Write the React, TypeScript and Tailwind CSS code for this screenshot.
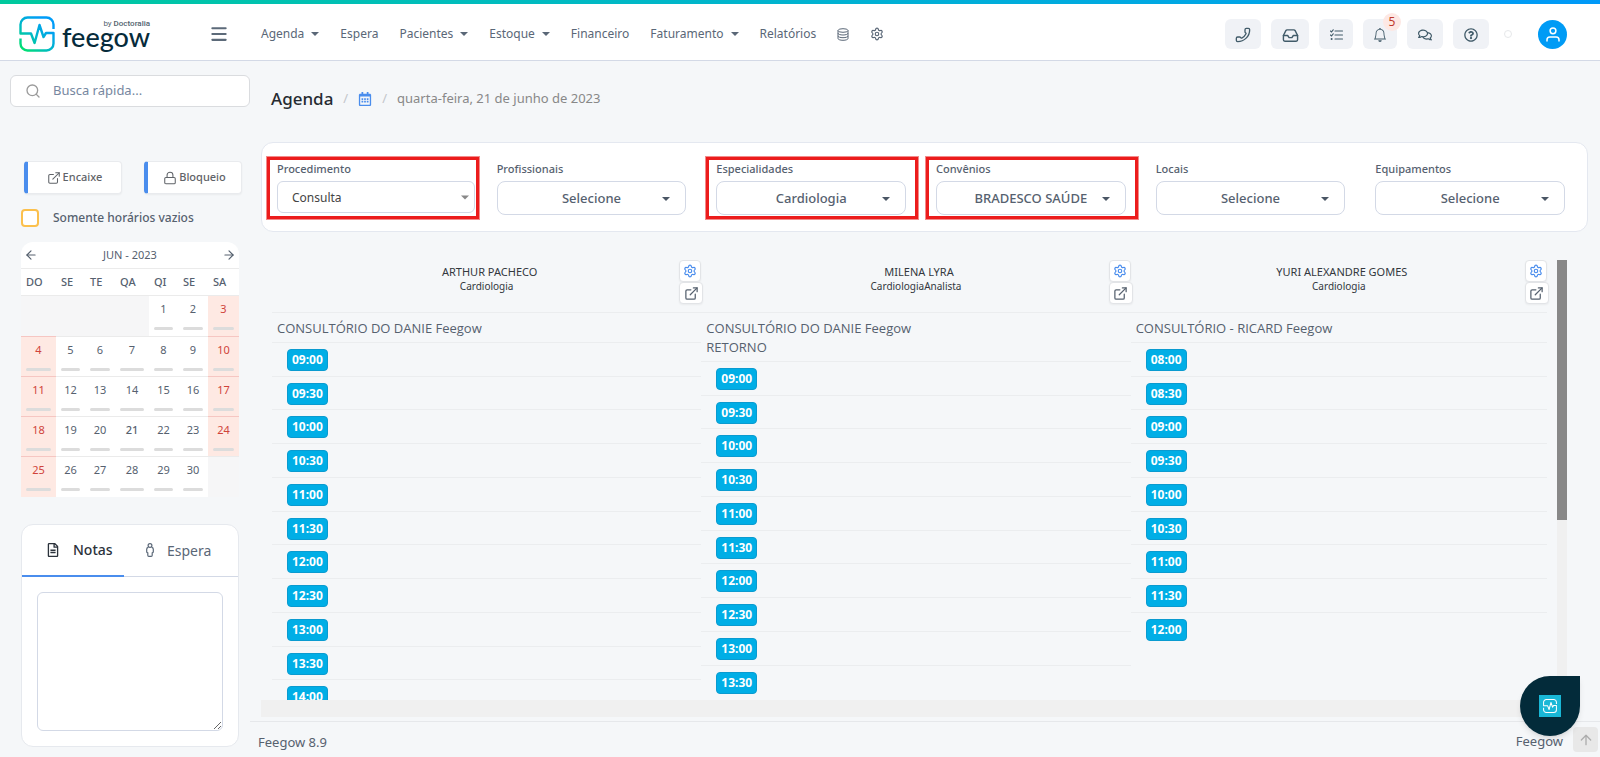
import { ReactNode } from 'react';
import { clsx } from 'clsx';
import {
  ArrowLeft,
  ArrowRight,
  ArrowUp,
  ExternalLink,
  Inbox,
  Lock,
  Menu,
  Phone,
  Search,
  Settings,
} from 'lucide-react';
import { BsBell } from 'react-icons/bs';
import { FaRegCalendarAlt, FaRegComments, FaRegFileAlt, FaRegQuestionCircle } from 'react-icons/fa';

const NAV = [
  { label: 'Agenda', menu: true },
  { label: 'Espera' },
  { label: 'Pacientes', menu: true },
  { label: 'Estoque', menu: true },
  { label: 'Financeiro' },
  { label: 'Faturamento', menu: true },
  { label: 'Relatórios' },
];

const FILTERS = [
  { id: 'profissionais', label: 'Profissionais', value: 'Selecione' },
  { id: 'especialidades', label: 'Especialidades', value: 'Cardiologia', marked: true },
  { id: 'convenios', label: 'Convênios', value: 'BRADESCO SAÚDE', marked: true },
  { id: 'locais', label: 'Locais', value: 'Selecione' },
  { id: 'equipamentos', label: 'Equipamentos', value: 'Selecione' },
];

const WEEKDAYS = ['DO', 'SE', 'TE', 'QA', 'QI', 'SE', 'SA'];

const WEEKS = [
  [0, 0, 0, 0, 1, 2, 3],
  [4, 5, 6, 7, 8, 9, 10],
  [11, 12, 13, 14, 15, 16, 17],
  [18, 19, 20, 21, 22, 23, 24],
  [25, 26, 27, 28, 29, 30, 0],
];

const SCHEDULE = [
  {
    name: 'ARTHUR PACHECO',
    specialty: 'Cardiologia',
    room: ['CONSULTÓRIO DO DANIE Feegow'],
    slots: ['09:00', '09:30', '10:00', '10:30', '11:00', '11:30', '12:00', '12:30', '13:00', '13:30', '14:00'],
  },
  {
    name: 'MILENA LYRA',
    specialty: 'CardiologiaAnalista',
    room: ['CONSULTÓRIO DO DANIE Feegow', 'RETORNO'],
    slots: ['09:00', '09:30', '10:00', '10:30', '11:00', '11:30', '12:00', '12:30', '13:00', '13:30'],
  },
  {
    name: 'YURI ALEXANDRE GOMES',
    specialty: 'Cardiologia',
    room: ['CONSULTÓRIO - RICARD Feegow'],
    slots: ['08:00', '08:30', '09:00', '09:30', '10:00', '10:30', '11:00', '11:30', '12:00'],
  },
];

function Caret({ className }: { className?: string }) {
  return (
    <svg viewBox="0 0 8 4" className={clsx('w-2 h-1 fill-current', className)} aria-hidden="true">
      <path d="M0 0h8L4 4z" />
    </svg>
  );
}

function PulsePath() {
  return (
    <path
      d="M34.5 13V8.5a7 7 0 0 0-7-7h-19a7 7 0 0 0-7 7v9H12l3.600 9.500L20.500 9l4 12 2.500-4h7.500v10.500a7 7 0 0 1-7 7h-19a7 7 0 0 1-7-7V22.500"
      strokeLinejoin="round"
    />
  );
}

function Logo() {
  return (
    <a href="#" aria-label="feegow by Doctoralia" className="flex items-start gap-[7px]">
      <svg viewBox="0 0 36 36" className="w-9 h-9" fill="none" stroke="url(#logo)" strokeWidth="2.400">
        <defs>
          <linearGradient id="logo" gradientUnits="userSpaceOnUse" x1="3" y1="33" x2="26" y2="6">
            <stop offset="0" stopColor="#00e070" />
            <stop offset="0.500" stopColor="#00b8c8" />
            <stop offset="1" stopColor="#009cf8" />
          </linearGradient>
        </defs>
        <PulsePath />
      </svg>
      <span className="flex flex-col pt-[3px] text-[#062b3b]">
        <span className="text-right font-[Roboto] text-[8px] leading-[10px] text-[#52626e]">
          by <b className="font-medium">Doctoralia</b>
        </span>
        <span className="font-[Lato] text-[27px] leading-4 font-medium">feegow</span>
      </span>
    </a>
  );
}

function DatabaseIcon() {
  return (
    <svg viewBox="0 0 12 13" className="w-3 h-[13px]" fill="none" stroke="currentColor">
      <ellipse cx="6" cy="2.500" rx="5" ry="1.800" />
      <path d="M1 2.500v8c0 1 2.200 1.800 5 1.800s5-.8 5-1.800v-8M1 5.200C1 6.200 3.200 7 6 7s5-.8 5-1.800M1 7.900c0 1 2.200 1.800 5 1.800s5-.8 5-1.800" />
    </svg>
  );
}

function TasksIcon() {
  return (
    <svg viewBox="0 0 13 12" className="w-[13px] h-3" fill="none" stroke="currentColor" strokeLinecap="round">
      <path d="M5 2h7.500M5 6h7.500M5 10h7.500" strokeWidth="1.100" />
      <path d="M.5 2l1 1L3.200.8M.5 6l1 1L3.200 4.800" strokeWidth="1.100" />
      <circle cx="1.600" cy="10" r="1" fill="currentColor" stroke="none" />
    </svg>
  );
}

function PersonIcon() {
  return (
    <svg viewBox="0 0 8 14" className="w-2 h-[14px]" fill="none" stroke="currentColor" strokeWidth="1.200">
      <circle cx="4" cy="2.500" r="1.900" />
      <path d="M2.200 4.400C1.100 4.600.7 5.200.7 6.200v2.600c0 .7.400 1 1.100 1.100v2.300c0 .8.400 1.200 1 1.200h2.400c.6 0 1-.4 1-1.200V9.900c.7-.1 1.100-.4 1.100-1.100V6.200c0-1-.4-1.600-1.500-1.800" />
    </svg>
  );
}

function UserIcon() {
  return (
    <svg viewBox="0 0 14 15" className="w-[14px] h-[15px]" fill="none" stroke="currentColor" strokeWidth="1.500">
      <circle cx="7" cy="3.800" r="2.900" />
      <path d="M1 14.500v-1.700c0-1.700 1-2.800 2.800-2.800h6.400c1.800 0 2.800 1.100 2.800 2.800v1.700" />
    </svg>
  );
}

interface ToolButtonProps {
  label: string;
  className?: string;
  badge?: string;
  children: ReactNode;
}

function ToolButton({ label, className = 'w-9', badge, children }: ToolButtonProps) {
  return (
    <button
      type="button"
      aria-label={label}
      className={clsx('relative flex h-[30px] items-center justify-center rounded-md bg-[#f0f2f6] pt-0.5 text-[#415b69]', className)}
    >
      {children}
      {badge && (
        <span className="absolute -top-1.5 -right-1 flex h-[18px] w-[18px] items-center justify-center rounded-full bg-[#fde8e4] text-xs leading-none text-[#c0392b]">
          {badge}
        </span>
      )}
    </button>
  );
}

function Header() {
  return (
    <header className="shrink-0 border-b border-[#d3d9e6] bg-white">
      <div className="h-1 bg-linear-to-r from-[#00c99d] via-[#00b3d0] to-[#0099f8]" />
      <div className="flex h-14 items-center pt-1 pl-[19px] pr-[33px]">
        <div className="w-[190px]">
          <Logo />
        </div>
        <button type="button" aria-label="Abrir menu" className="w-[52px] text-[#5c6a79]">
          <Menu className="h-5 w-5" strokeWidth={2.5} />
        </button>
        <nav className="flex items-center gap-[21px] text-[12px] text-[#5a6777]">
          {NAV.map(item =>
            item.menu ? (
              <button key={item.label} type="button" className="flex items-center gap-[7px]">
                {item.label}
                <Caret />
              </button>
            ) : (
              <a key={item.label} href="#">{item.label}</a>
            )
          )}
          <button type="button" aria-label="Dados"><DatabaseIcon /></button>
          <button type="button" aria-label="Configurações"><Settings className="h-[14px] w-[14px]" /></button>
        </nav>
        <div className="ml-auto flex items-center gap-2.5">
          <ToolButton label="Telefone"><Phone className="h-4 w-4 -scale-x-100" strokeWidth={2} /></ToolButton>
          <ToolButton label="Caixa de entrada" className="w-[38px]"><Inbox className="h-[17px] w-[17px]" /></ToolButton>
          <ToolButton label="Tarefas" className="w-[34px]"><TasksIcon /></ToolButton>
          <ToolButton label="Notificações" className="w-[34px]" badge="5"><BsBell className="h-[14px] w-[14px]" /></ToolButton>
          <ToolButton label="Conversas"><FaRegComments className="h-[14px] w-[14px]" /></ToolButton>
          <ToolButton label="Ajuda"><FaRegQuestionCircle className="h-[14px] w-[14px]" /></ToolButton>
          <span className="mr-4 ml-[5px] h-2 w-2 rounded-full border border-[#e6e8ea]" />
          <button
            type="button"
            aria-label="Perfil"
            className="flex h-[29px] w-[29px] items-center justify-center rounded-full bg-[#009bf5] text-white"
          >
            <UserIcon />
          </button>
        </div>
      </div>
    </header>
  );
}

function Calendar() {
  return (
    <section className="overflow-hidden rounded-t-xl bg-white text-[#56616f]">
      <div className="flex h-[26px] items-center justify-between px-[3px] text-[11px]">
        <button type="button" aria-label="Mês anterior"><ArrowLeft className="h-[14px] w-[14px]" /></button>
        <span>JUN - 2023</span>
        <button type="button" aria-label="Próximo mês"><ArrowRight className="h-[14px] w-[14px]" /></button>
      </div>
      <table className="w-full table-fixed border-collapse text-[11px]">
        <colgroup>
          <col className="w-[35px]" />
          <col className="w-[29px]" />
          <col className="w-[30px]" />
          <col className="w-[34px]" />
          <col className="w-[29px]" />
          <col className="w-[30px]" />
          <col className="w-[31px]" />
        </colgroup>
        <thead>
          <tr className="h-[27px] border-y border-[#ebebeb]">
            {WEEKDAYS.map((d, i) => (
              <th key={i} className="pl-[5px] text-left text-[11px] font-medium">{d}</th>
            ))}
          </tr>
        </thead>
        <tbody>
          {WEEKS.map((week, w) => (
            <tr key={w} className="h-10 first:h-[41px]">
              {week.map((day, i) => {
                const weekend = i === 0 || i === 6;
                return (
                  <td
                    key={i}
                    className={clsx(
                      'p-0 align-top',
                      w > 0 && 'border-t',
                      day > 0 && weekend ? 'border-[#f6c6c2] bg-[#fee9e3] text-[#d0433a]' : 'border-[#ebebeb]',
                      day === 0 && 'bg-[#f6f6f7]'
                    )}
                  >
                    {day > 0 && (
                      <div className="flex h-[39px] flex-col items-center justify-between px-[5px] pt-1 pb-[5px]">
                        <span className={clsx('leading-[18px]', day === 21 && 'font-medium')}>{day}</span>
                        <span className="h-[3px] w-full rounded-full bg-[#dcdcdc]" />
                      </div>
                    )}
                  </td>
                );
              })}
            </tr>
          ))}
        </tbody>
      </table>
    </section>
  );
}

function Notes() {
  return (
    <section className="flex min-h-[223px] flex-col rounded-xl border border-[#e6e9ee] bg-white">
      <div className="flex border-b border-[#d3d9e6] text-[14px]">
        <button
          type="button"
          className="-mb-px flex h-[52px] w-[102px] items-center gap-[13px] border-b-2 border-[#4a8ded] pl-6 font-medium text-[#2b323b]"
        >
          <FaRegFileAlt className="h-[14px] w-[14px]" />
          Notas
        </button>
        <button type="button" className="flex items-center gap-[13px] pl-[22px] text-[#5a6777]">
          <PersonIcon />
          Espera
        </button>
      </div>
      <div className="flex flex-1 p-[15px]">
        <textarea aria-label="Notas" className="w-full resize rounded-md border border-[#d3d9e6] bg-white" />
      </div>
    </section>
  );
}

function Sidebar() {
  return (
    <aside className="flex w-[250px] shrink-0 flex-col">
      <label className="ml-2.5 mt-3.5 flex h-8 items-center gap-3 rounded-md border border-[#dadcdf] bg-white pl-3.5 pr-2">
        <Search className="h-4 w-4 shrink-0 text-[#9b9b9b]" />
        <input
          type="search"
          aria-label="Busca rápida"
          placeholder="Busca rápida..."
          className="min-w-0 flex-1 bg-transparent text-[13px] outline-none placeholder:text-[#7787a0]"
        />
      </label>
      <div className="mt-[54px] flex justify-between pl-6 pr-2">
        {[
          { label: 'Encaixe', icon: <ExternalLink className="h-[14px] w-[14px]" strokeWidth={1.8} /> },
          { label: 'Bloqueio', icon: <Lock className="h-[14px] w-[14px]" strokeWidth={1.8} /> },
        ].map(action => (
          <button
            key={action.label}
            type="button"
            className="flex h-[33px] w-[98px] items-center justify-center gap-0.5 rounded border border-l-4 border-[#e9ebee] border-l-[#4a8ded] bg-white text-[11px] font-medium text-[#5f6368] shadow-xs"
          >
            {action.icon}
            {action.label}
          </button>
        ))}
      </div>
      <div className="flex flex-col pl-[21px] pr-[11px]">
        <label className="mt-[15px] flex items-center gap-3.5 text-[12px] leading-[18px] font-medium text-[#56616f]">
          <input
            type="checkbox"
            className="h-[18px] w-[18px] appearance-none rounded border-2 border-[#fbc04d] bg-white"
          />
          Somente horários vazios
        </label>
        <div className="mt-[15px]">
          <Calendar />
        </div>
        <div className="mt-[27px]">
          <Notes />
        </div>
      </div>
    </aside>
  );
}

function Marker() {
  return (
    <span className="pointer-events-none absolute -left-[11px] -right-[13px] -top-[7px] h-16 border-4 border-[#ec1c1c] outline-1 -outline-offset-1 outline-[#f38b8b]" />
  );
}

function Filters() {
  return (
    <section className="mr-3 ml-[11px] grid h-[90px] shrink-0 grid-cols-6 gap-x-[30px] rounded-xl border border-[#e4e8f0] bg-white pl-[15px] pr-[22px] pt-5">
      <div className="relative flex flex-col">
        <label htmlFor="procedimento" className="text-[11px] leading-3 font-medium text-[#56616f]">Procedimento</label>
        <div className="relative mt-1.5 -mr-2">
          <select
            id="procedimento"
            className="h-8 w-full appearance-none rounded-md border border-[#d3d9e6] bg-white pt-0.5 pl-3.5 text-[12px] text-[#444]"
          >
            <option>Consulta</option>
          </select>
          <Caret className="pointer-events-none absolute right-1.5 top-3.5 h-[5px] text-[#888]" />
        </div>
        <Marker />
      </div>
      {FILTERS.map(f => (
        <div key={f.id} className="relative flex flex-col">
          <label htmlFor={f.id} className="text-[11px] leading-3 font-medium text-[#56616f]">{f.label}</label>
          <div className="relative mt-1.5">
            <select
              id={f.id}
              className="h-[34px] w-full appearance-none rounded-lg border border-[#d3d9e6] bg-white pt-0.5 text-center text-[13px] font-medium text-[#56616f] [text-align-last:center]"
            >
              <option>{f.value}</option>
            </select>
            <Caret className="pointer-events-none absolute right-4 top-4 text-[#4a5665]" />
          </div>
          {f.marked && <Marker />}
        </div>
      ))}
    </section>
  );
}

function Schedule() {
  return (
    <section className="mr-[33px] ml-[11px] mt-7 flex min-h-0 flex-1 flex-col">
      <div className="flex min-h-0 flex-1">
        <div className="grid min-w-0 flex-1 grid-cols-[429fr_429fr_416fr] overflow-hidden pl-[11px] pr-2.5">
          {SCHEDULE.map(col => (
            <div key={col.name} className="text-[#56616f]">
              <div className="relative h-[53px] border-b border-[#ebedef] pt-1 text-center text-[#33383e]">
                <p className="pl-1.5 text-[11px] leading-4">{col.name}</p>
                <p className="text-[10px] leading-[13px]">{col.specialty}</p>
                <div className="absolute -right-0.5 top-0 flex flex-col items-start">
                  <button
                    type="button"
                    aria-label="Configurar agenda"
                    className="flex h-[22px] w-[22px] items-center justify-center rounded border border-[#e2e4e7] bg-white text-[#4a8ded] shadow-xs"
                  >
                    <Settings className="h-[14px] w-[14px]" />
                  </button>
                  <button
                    type="button"
                    aria-label="Abrir agenda"
                    className="flex h-[22px] w-6 items-center justify-center rounded border border-[#e2e4e7] bg-white text-[#56616f] shadow-xs"
                  >
                    <ExternalLink className="h-[15px] w-[15px]" />
                  </button>
                </div>
              </div>
              <div className="border-b border-[#ebedef] pt-1.5 pb-1 pl-[5px] font-['Open_Sans','Noto_Sans',sans-serif] text-[13px] leading-[19px]">
                {col.room.map(line => (
                  <p key={line}>{line}</p>
                ))}
              </div>
              <ul>
                {col.slots.map(slot => (
                  <li
                    key={slot}
                    className="flex h-[34px] items-start border-b border-[#ebedef] pt-1.5 pl-[15px] last:border-b-0 nth-[4n+2]:h-[33px]"
                  >
                    <button
                      type="button"
                      className="h-[22px] rounded border border-[#0a9bd0] bg-[#00aee6] px-1 text-[12px] leading-5 font-bold text-white"
                    >
                      {slot}
                    </button>
                  </li>
                ))}
              </ul>
            </div>
          ))}
        </div>
        <div className="w-2.5 shrink-0 bg-[#f0f0f0]">
          <div className="h-[59%] bg-[#888]" />
        </div>
      </div>
      <div className="h-[17px] shrink-0 bg-[#f0f0f0]" />
    </section>
  );
}

export default function App() {
  return (
    <div className="flex h-screen flex-col overflow-hidden bg-[#f5f7f9] font-['Noto_Sans','Open_Sans',sans-serif]">
      <Header />
      <div className="flex min-h-0 flex-1">
        <Sidebar />
        <main className="flex min-w-0 flex-1 flex-col">
          <div className="flex h-[81px] shrink-0 items-center gap-2.5 pl-[21px] pb-1.5 text-[13px] text-[#888]">
            <h1 className="text-[17px] font-medium text-[#262b31]">Agenda</h1>
            <span className="text-[#c3c6ca]">/</span>
            <button type="button" aria-label="Escolher data" className="text-[#4a8ded]">
              <FaRegCalendarAlt className="h-[14px] w-[14px]" />
            </button>
            <span className="text-[#c3c6ca]">/</span>
            <span>quarta-feira, 21 de junho de 2023</span>
          </div>
          <Filters />
          <Schedule />
          <footer className="mt-1 flex h-9 shrink-0 items-center border-t border-[#e6e8eb] pl-2 pr-0.5 text-[13px] text-[#56616f]">
            <span className="mt-1.5">Feegow 8.9</span>
            <span className="mt-1 ml-auto mr-2.5">Feegow</span>
            <button
              type="button"
              aria-label="Voltar ao topo"
              className="flex h-[25px] w-[25px] items-center justify-center rounded bg-[#e8e8e8] text-[#adadad]"
            >
              <ArrowUp className="h-4 w-4" />
            </button>
          </footer>
        </main>
      </div>
      <button
        type="button"
        aria-label="Ajuda Feegow"
        className="fixed right-5 bottom-[21px] flex h-[60px] w-[60px] items-center justify-center rounded-full rounded-tr-lg bg-[#032b3a] shadow-md"
      >
        <span className="flex h-[22px] w-[22px] items-center justify-center bg-[#19b7d6]">
          <svg viewBox="0 0 36 36" className="h-[14px] w-[14px]" fill="none" stroke="#fff" strokeWidth="2.600">
            <PulsePath />
          </svg>
        </span>
      </button>
    </div>
  );
}
